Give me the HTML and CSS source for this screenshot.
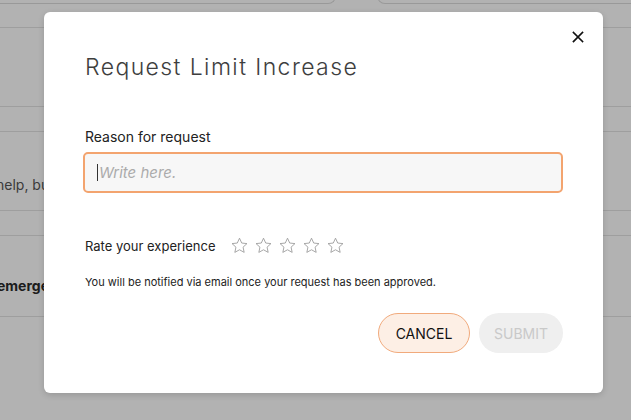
FILE: index.html
```html
<!DOCTYPE html>
<html>
<head>
<meta charset="utf-8">
<link rel="stylesheet" href="styles.css">
</head>
<body>
<div class="page">
  <div class="top-fields">
    <div class="pill pill-left"></div>
    <div class="pill pill-right"></div>
  </div>
  <div class="row r1"></div>
  <div class="row r2"></div>
  <div class="row r3"></div>
  <div class="row r4"><span class="bgtext">help, but</span></div>
  <div class="row r5"></div>
  <div class="row r6"><span class="bgtext bold">emergency</span></div>
  <div class="row r7"></div>
</div>
<div class="overlay"></div>
<div class="modal">
  <button class="close" aria-label="Close">
    <svg width="12" height="12" viewBox="0 0 12 12"><path d="M1.5 1.5 L10.5 10.5 M10.5 1.5 L1.5 10.5" stroke="#111" stroke-width="1.7" stroke-linecap="square"/></svg>
  </button>
  <h1 class="title">Request Limit Increase</h1>
  <label class="label">Reason for request</label>
  <div class="input"><span class="caret"></span><span class="placeholder">Write here.</span></div>
  <div class="rate">
    <span class="rate-label">Rate your experience</span>
    <div class="stars">
      <svg class="star" viewBox="0 0 24 24"><path d="M12 2.8l2.8 6.1 6.6.7-4.9 4.5 1.4 6.6L12 17.4l-5.9 3.3 1.4-6.6-4.9-4.5 6.6-.7z"/></svg>
      <svg class="star" viewBox="0 0 24 24"><path d="M12 2.8l2.8 6.1 6.6.7-4.9 4.5 1.4 6.6L12 17.4l-5.9 3.3 1.4-6.6-4.9-4.5 6.6-.7z"/></svg>
      <svg class="star" viewBox="0 0 24 24"><path d="M12 2.8l2.8 6.1 6.6.7-4.9 4.5 1.4 6.6L12 17.4l-5.9 3.3 1.4-6.6-4.9-4.5 6.6-.7z"/></svg>
      <svg class="star" viewBox="0 0 24 24"><path d="M12 2.8l2.8 6.1 6.6.7-4.9 4.5 1.4 6.6L12 17.4l-5.9 3.3 1.4-6.6-4.9-4.5 6.6-.7z"/></svg>
      <svg class="star" viewBox="0 0 24 24"><path d="M12 2.8l2.8 6.1 6.6.7-4.9 4.5 1.4 6.6L12 17.4l-5.9 3.3 1.4-6.6-4.9-4.5 6.6-.7z"/></svg>
    </div>
  </div>
  <p class="note">You will be notified via email once your request has been approved.</p>
  <div class="actions">
    <button class="btn cancel">CANCEL</button>
    <button class="btn submit">SUBMIT</button>
  </div>
</div>
</body>
</html>
```
FILE: styles.css
```css
* { box-sizing: border-box; }
html, body { margin: 0; padding: 0; }
body {
  width: 631px;
  height: 420px;
  overflow: hidden;
  background: #fff;
  font-family: "Inter", "Noto Sans", sans-serif;
  position: relative;
}
.page {
  display: flex;
  flex-direction: column;
}
.top-fields {
  display: flex;
  height: 4px;
  gap: 41px;
  align-items: flex-end;
}
.pill {
  height: 20px;
  border: 1px solid #dcdcdc;
  border-top: none;
  border-radius: 0 0 8px 8px;
}
.pill-left { width: 356px; margin-left: -20px; flex: none; }
.pill-right { flex: 1; margin-right: -20px; }
.row {
  border-bottom: 1px solid #e3e3e3;
  display: flex;
  align-items: flex-start;
  overflow: hidden;
  white-space: nowrap;
}
.r1 { height: 24px; }
.r2 { height: 79px; }
.r3 { height: 25px; }
.r4 { height: 79px; padding-top: 44px; }
.r5 { height: 25px; }
.r6 { height: 81px; padding-top: 41px; }
.r7 { height: 25px; border-bottom: none; }
.bgtext {
  font-size: 14px;
  line-height: 17px;
  color: #555;
  margin-left: -4px;
}
.bold { font-weight: 700; color: #2a2a2a; margin-left: -3px; }

.overlay {
  position: absolute;
  inset: 0;
  background: rgba(0, 0, 0, 0.3);
}
.modal {
  position: absolute;
  left: 44px;
  top: 12px;
  width: 559px;
  height: 381px;
  background: #fff;
  border-radius: 6px;
  box-shadow: 0 2px 6px rgba(0,0,0,0.15);
  padding: 43px 40px 0 41px;
  display: flex;
  flex-direction: column;
}
.close {
  position: absolute;
  right: 19px;
  top: 19px;
  width: 12px;
  height: 12px;
  padding: 0;
  border: none;
  background: none;
  display: flex;
}
.title {
  margin: 0;
  font-family: "Inter", sans-serif;
  font-weight: 300;
  font-size: 23px;
  line-height: 24px;
  color: #3e3e3e;
  letter-spacing: 1.4px;
}
.label {
  margin-top: 49px;
  font-size: 14px;
  line-height: 18px;
  color: #222;
}
.input {
  margin-top: 6px;
  margin-left: -2px;
  height: 41px;
  border: 2px solid #f3a46f;
  border-radius: 5px;
  background: #f7f7f7;
  display: flex;
  align-items: center;
  padding-left: 12px;
}
.caret {
  width: 1px;
  height: 17px;
  background: #333;
  margin-right: 1px;
}
.placeholder {
  font-style: italic;
  font-size: 15px;
  color: #ababab;
}
.rate {
  margin-top: 43px;
  display: flex;
  align-items: center;
  gap: 15px;
}
.rate-label {
  font-size: 13px;
  color: #222;
}
.stars {
  display: flex;
  gap: 5px;
}
.star {
  width: 19px;
  height: 19px;
  fill: none;
  stroke: #9a9a9a;
  stroke-width: 1.1;
  stroke-linejoin: miter;
}
.note {
  margin: 20px 0 0 0;
  font-size: 11px;
  line-height: 14px;
  color: #222;
}
.actions {
  margin-top: 24px;
  display: flex;
  justify-content: flex-end;
  gap: 9px;
}
.btn {
  height: 40px;
  border-radius: 20px;
  font-family: "Inter", sans-serif;
  font-size: 14px;
  padding: 0;
}
.cancel {
  width: 92px;
  background: #fdefe5;
  border: 1px solid #f1aa7c;
  color: #111;
}
.submit {
  width: 84px;
  background: #efefef;
  border: none;
  color: #c9c9c9;
}
```
